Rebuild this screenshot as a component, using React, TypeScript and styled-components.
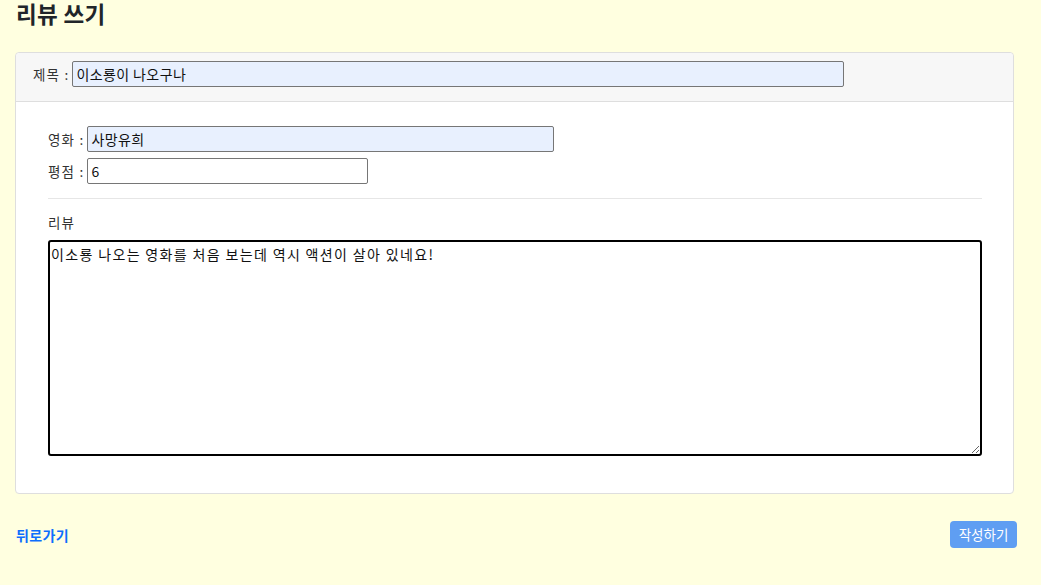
import React from "react";
import styled, { createGlobalStyle } from "styled-components";

const Global = createGlobalStyle`
  html, body { margin: 0; padding: 0; background: #ffffe0; }
  body { font-family: "Noto Sans CJK KR", "Noto Sans", sans-serif; color: #212529; }
  * { box-sizing: border-box; }
`;

const Page = styled.div`
  width: 1041px;
  min-height: 585px;
  background: #ffffe0;
  padding: 0 24px 0 15px;
  display: flex;
  flex-direction: column;
`;

const Title = styled.h2`
  margin: 0 0 0 1px;
  height: 52px;
  padding-top: 1px;
  font-size: 22.5px;
  line-height: 24px;
  font-weight: 700;
  letter-spacing: 0.3px;
  color: #212529;
`;

const Card = styled.div`
  width: 999px;
  background: #fff;
  border: 1px solid #dedede;
  border-radius: 4px;
  display: flex;
  flex-direction: column;
`;

const CardHeader = styled.div`
  background: #f7f7f7;
  border-bottom: 1px solid #dedede;
  border-radius: 4px 4px 0 0;
  padding: 8px 16px 14px 17px;
  display: flex;
  align-items: center;
`;

const CardBody = styled.div`
  padding: 24px 31px 37px 32px;
  display: flex;
  flex-direction: column;
`;

const Row = styled.div<{ $gap?: number }>`
  display: flex;
  align-items: center;
  height: 26px;
  margin-bottom: ${(p) => p.$gap ?? 0}px;
`;

const Label = styled.label`
  font-size: 13.5px;
  line-height: 20px;
  letter-spacing: 1.2px;
  color: #333;
  margin-right: 3px;
  white-space: nowrap;
`;

const TextInput = styled.input<{ $w: number; $filled?: boolean }>`
  width: ${(p) => p.$w}px;
  height: 26px;
  border: 1px solid #767676;
  border-radius: 2px;
  background: ${(p) => (p.$filled ? "#e8f0fe" : "#fff")};
  font-family: "Noto Sans CJK KR", "Noto Sans", sans-serif;
  font-size: 14px;
  letter-spacing: 0.4px;
  color: #111;
  padding: 0 3px;
  outline: none;
`;

const Divider = styled.hr`
  width: 100%;
  margin: 14px 0 13px;
  border: 0;
  border-top: 1px solid #e6e6e6;
`;

const ReviewLabel = styled.div`
  font-size: 13.5px;
  line-height: 20px;
  letter-spacing: 1px;
  color: #333;
  margin-bottom: 8px;
`;

const Textarea = styled.textarea`
  width: 934px;
  height: 216px;
  border: 2px solid #000;
  border-radius: 3px;
  padding: 2px 1px;
  font-family: "Noto Sans CJK KR", "Noto Sans", sans-serif;
  font-size: 14px;
  letter-spacing: 1.35px;
  line-height: 20px;
  color: #111;
  resize: both;
  outline: none;
`;

const Footer = styled.div`
  width: 1002px;
  margin-top: 27px;
  display: flex;
  justify-content: space-between;
  align-items: center;
`;

const BackLink = styled.a`
  margin-left: 1px;
  font-size: 14px;
  font-weight: 700;
  letter-spacing: 0.4px;
  color: #0d6efd;
  text-decoration: none;
  line-height: 20px;
  margin-top: 0;
`;

const SubmitButton = styled.button`
  height: 27px;
  width: 67px;
  padding: 0;
  border: 0;
  border-radius: 4px;
  background: #5f9ef2;
  color: #fff;
  font-family: "Noto Sans CJK KR", "Noto Sans", sans-serif;
  font-size: 13.5px;
  line-height: 27px;
`;

export default function App() {
  return (
    <>
      <Global />
      <Page>
        <Title>리뷰 쓰기</Title>
        <Card>
          <CardHeader>
            <Label>제목 :</Label>
            <TextInput $w={772} $filled defaultValue="이소룡이 나오구나" />
          </CardHeader>
          <CardBody>
            <Row $gap={6}>
              <Label>영화 :</Label>
              <TextInput $w={467} $filled defaultValue="사망유희" />
            </Row>
            <Row>
              <Label>평점 :</Label>
              <TextInput $w={281} defaultValue="6" />
            </Row>
            <Divider />
            <ReviewLabel>리뷰</ReviewLabel>
            <Textarea defaultValue="이소룡 나오는 영화를 처음 보는데 역시 액션이 살아 있네요!" />
          </CardBody>
        </Card>
        <Footer>
          <BackLink href="#">뒤로가기</BackLink>
          <SubmitButton>작성하기</SubmitButton>
        </Footer>
      </Page>
    </>
  );
}
